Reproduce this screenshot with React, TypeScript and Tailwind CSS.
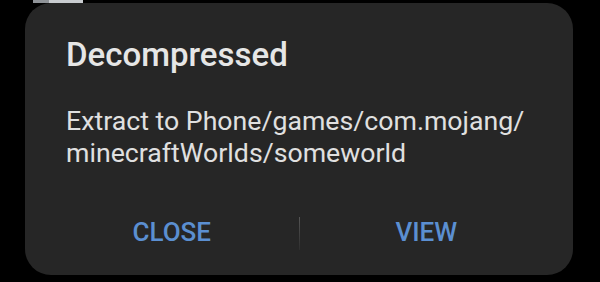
export default function App() {
  return (
    <div className="w-[600px] h-[282px] bg-black overflow-hidden font-['Roboto','Liberation_Sans',sans-serif]">
      {/* sliver of whatever sits behind the dialog */}
      <div className="ml-[33px] w-[50px] h-[3px] flex">
        <div className="w-[16px] bg-[#8f9398]" />
        <div className="flex-1 bg-[#c9ccd0]" />
      </div>

      <div className="ml-[25px] w-[548px] h-[272px] rounded-[26px] bg-[#262626] pt-[35px] pb-[25px] flex flex-col">
        <h1 className="pl-[41px] text-[33px] leading-none font-medium text-[#e6e6e6]">
          Decompressed
        </h1>
        <p className="mt-[34px] pl-[41px] text-[26.7px] leading-[32px] text-[#e0e0e0]">
          Extract to Phone/games/com.mojang/
          <br />
          minecraftWorlds/someworld
        </p>

        <div className="mt-auto px-5 flex items-start">
          <button className="flex-1 pt-px text-[26px] leading-none font-medium text-[#5b8fd1]">
            CLOSE
          </button>
          <div className="w-px h-[33px] -mt-px bg-gradient-to-b from-[#555] to-[#2e2e2e]" />
          <button className="flex-1 pt-px text-[26px] leading-none font-medium text-[#5b8fd1]">
            VIEW
          </button>
        </div>
      </div>
    </div>
  );
}
